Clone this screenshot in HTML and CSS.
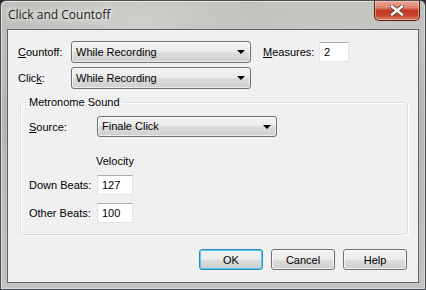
FILE: index.html
```html
<!DOCTYPE html>
<html lang="en">
<head>
  <meta charset="UTF-8" />
  <title>Click and Countoff</title>
  <link rel="stylesheet" href="styles.css">
</head>
<body>
  <div class="window">
    <div class="titlebar">
      <span class="title">Click and Countoff</span>
      <button class="close-btn">
        <svg width="14" height="11" viewBox="0 0 14 11">
          <path d="M2 1.5 L12 9.5 M12 1.5 L2 9.5" stroke="#5a3a33" stroke-width="4" stroke-linecap="square"/>
          <path d="M2 1.5 L12 9.5 M12 1.5 L2 9.5" stroke="#fff" stroke-width="2.4" stroke-linecap="square"/>
        </svg>
      </button>
    </div>

    <div class="client">
      <div class="row">
        <label class="lbl lbl-top"><u>C</u>ountoff:</label>
        <div class="combo combo-wide">While Recording<span class="arrow"></span></div>
        <label class="lbl lbl-measures"><u>M</u>easures:</label>
        <div class="field field-small">2</div>
      </div>
      <div class="row row-second">
        <label class="lbl lbl-top">Clic<u>k</u>:</label>
        <div class="combo combo-wide">While Recording<span class="arrow"></span></div>
      </div>

      <fieldset class="group">
        <legend>Metronome Sound</legend>
        <div class="row">
          <label class="lbl lbl-group"><u>S</u>ource:</label>
          <div class="combo combo-wide combo-source">Finale Click<span class="arrow"></span></div>
        </div>
        <div class="velocity">Velocity</div>
        <div class="row row-down">
          <label class="lbl lbl-group">Down Beats:</label>
          <div class="field field-num">127</div>
        </div>
        <div class="row row-other">
          <label class="lbl lbl-group">Other Beats:</label>
          <div class="field field-num">100</div>
        </div>
      </fieldset>

      <div class="buttons">
        <button class="btn btn-default">OK</button>
        <button class="btn">Cancel</button>
        <button class="btn">Help</button>
      </div>
    </div>
  </div>
</body>
</html>
```

FILE: styles.css
```css
* {
  box-sizing: border-box;
}

html, body {
  margin: 0;
  width: 426px;
  height: 290px;
  overflow: hidden;
  background: #2b2b2b;
}

.window {
  width: 426px;
  height: 290px;
  border: 1px solid #4c4f52;
  border-radius: 6px 6px 0 0;
  padding: 0 6px 6px 6px;
  display: flex;
  flex-direction: column;
  background:
    radial-gradient(ellipse 120px 40px at 140px 20px, rgba(255,255,255,0.25), transparent),
    radial-gradient(ellipse 140px 50px at 330px 40px, rgba(255,255,255,0.18), transparent),
    linear-gradient(180deg, #c2c1bd 0%, #b7b6b2 40%, #c4c3bf 100%);
  box-shadow: inset 1px 1px 0 rgba(255,255,255,0.55), inset -1px -1px 0 rgba(255,255,255,0.35);
}

.titlebar {
  height: 28px;
  display: flex;
  justify-content: space-between;
  align-items: flex-start;
}

.title {
  margin: 6px 0 0 1px;
  font-family: "Open Sans", "Noto Sans", sans-serif;
  font-size: 12px;
  line-height: 16px;
  color: #1a1a1a;
  text-shadow: 0 0 8px rgba(255,255,255,0.9), 0 0 4px rgba(255,255,255,0.9);
}

.close-btn {
  width: 46px;
  height: 20px;
  margin-right: -1px;
  border: 1px solid #52231b;
  border-top: none;
  border-radius: 0 0 5px 5px;
  padding: 0;
  display: flex;
  align-items: center;
  justify-content: center;
  background: linear-gradient(180deg, #e9a595 0%, #dc8470 35%, #c43a24 50%, #c5432b 75%, #dd8466 100%);
  box-shadow: inset 0 0 0 1px rgba(255,220,210,0.45);
}

.client {
  flex: 1;
  border: 1px solid #5e6266;
  background: #f0f0f0;
  padding: 11px 10px 0 10px;
  font-family: "Liberation Sans", "DejaVu Sans", sans-serif;
  font-size: 11px;
  color: #000;
}

.row {
  display: flex;
  align-items: center;
}

.row-second {
  margin-top: 4px;
}

.lbl {
  line-height: 14px;
  white-space: nowrap;
  flex-shrink: 0;
}

.lbl-top {
  width: 53px;
}

.lbl-measures {
  margin-left: 12px;
  width: 56px;
}

.lbl-group {
  width: 68px;
}

.combo {
  position: relative;
  flex-shrink: 0;
  height: 22px;
  line-height: 20px;
  padding-left: 4px;
  border: 1px solid #707070;
  border-radius: 3px;
  background: linear-gradient(180deg, #f2f2f2 0%, #ebebeb 50%, #dddddd 50%, #cfcfcf 100%);
  box-shadow: inset 0 0 0 1px rgba(255,255,255,0.6);
  color: #000;
}

.combo-wide {
  width: 180px;
}

.combo-source {
  height: 21px;
  line-height: 19px;
}

.arrow {
  position: absolute;
  right: 5px;
  top: 8px;
  border-left: 4px solid transparent;
  border-right: 4px solid transparent;
  border-top: 4px solid #000;
}

.field {
  flex-shrink: 0;
  height: 20px;
  line-height: 18px;
  padding-left: 4px;
  background: #fff;
  border: 1px solid #e2e3ea;
  border-top-color: #abadb3;
}

.field-small {
  width: 30px;
}

.field-num {
  width: 36px;
}

.group {
  margin: 6px 0 0 2px;
  width: 388px;
  border: 1px solid #d5dfe5;
  border-radius: 3px;
  box-shadow: inset 1px 1px 0 #fff, 1px 1px 0 #fff;
  padding: 7px 8px 11px 8px;
  min-width: 0;
}

.group legend {
  padding: 0 2px;
  margin-left: -2px;
  line-height: 14px;
}

.velocity {
  margin: 17px 0 0 67px;
  line-height: 14px;
}

.row-down {
  margin-top: 7px;
}

.row-other {
  margin-top: 8px;
}

.buttons {
  display: flex;
  justify-content: flex-end;
  gap: 8px;
  margin: 14px 1px 0 0;
}

.btn {
  width: 64px;
  height: 21px;
  padding: 0;
  font-family: "Liberation Sans", "DejaVu Sans", sans-serif;
  font-size: 11px;
  color: #000;
  border: 1px solid #707070;
  border-radius: 3px;
  background: linear-gradient(180deg, #f2f2f2 0%, #ebebeb 50%, #dddddd 50%, #cfcfcf 100%);
  box-shadow: inset 0 0 0 1px rgba(255,255,255,0.7);
}

.btn-default {
  border-color: #3c7fb1;
  box-shadow: inset 0 0 0 1px #48d4f9;
}
```
